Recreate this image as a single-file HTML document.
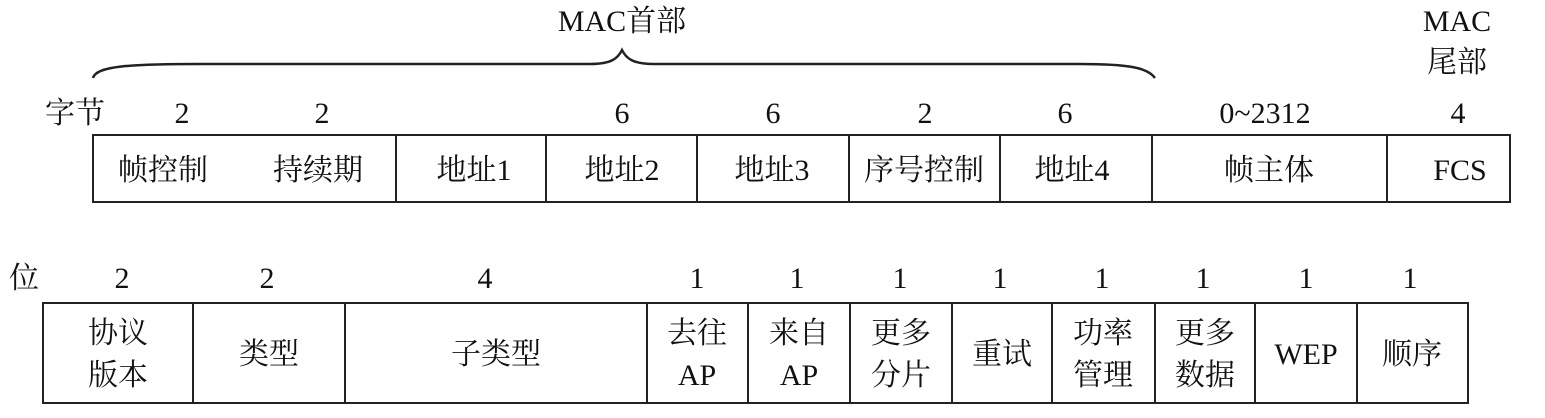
<!DOCTYPE html>
<html><head><meta charset="utf-8"><style>
html,body{margin:0;padding:0;background:#fff;}
svg text{font-family:"Liberation Serif","Noto Serif CJK SC",serif;font-size:30px;fill:#111;}
</style></head><body>
<svg width="1545" height="413" viewBox="0 0 1545 413" xmlns="http://www.w3.org/2000/svg">
<g stroke="#222" stroke-width="2" fill="none">
<path d="M93 78 C96 66 130 64 200 64 L590 64 C612 64 618 58 622 50 C626 58 632 64 654 64 L1080 64 C1130 64 1148 68 1155 78" stroke-width="2.5"/>
<rect x="93" y="135" width="1417" height="67"/>
<path d="M396 135V202M546 135V202M697 135V202M849 135V202M1000 135V202M1152 135V202M1387 135V202"/>
<rect x="43" y="303" width="1425" height="100"/>
<path d="M193 303V403M345 303V403M647 303V403M748 303V403M850 303V403M952 303V403M1052 303V403M1155 303V403M1255 303V403M1357 303V403"/>
</g>
<g text-anchor="middle">
<text x="622" y="31">MAC首部</text>
<text x="1457" y="31">MAC</text>
<text x="1457" y="72">尾部</text>
<text x="75" y="123">字节</text>
<text x="182" y="123">2</text><text x="322" y="123">2</text><text x="622" y="123">6</text><text x="773" y="123">6</text><text x="925" y="123">2</text><text x="1065" y="123">6</text><text x="1265" y="123">0~2312</text><text x="1458" y="123">4</text>
<text x="163" y="180">帧控制</text><text x="318" y="180">持续期</text><text x="474" y="180">地址1</text><text x="622" y="180">地址2</text><text x="772" y="180">地址3</text><text x="924" y="180">序号控制</text><text x="1072" y="180">地址4</text><text x="1269" y="180">帧主体</text><text x="1460" y="180">FCS</text>
<text x="24" y="288">位</text>
<text x="122" y="288">2</text><text x="267" y="288">2</text><text x="485" y="288">4</text><text x="697" y="288">1</text><text x="797" y="288">1</text><text x="900" y="288">1</text><text x="1000" y="288">1</text><text x="1102" y="288">1</text><text x="1203" y="288">1</text><text x="1306" y="288">1</text><text x="1410" y="288">1</text>
<text x="118" y="343">协议</text><text x="118" y="385">版本</text>
<text x="269" y="364">类型</text>
<text x="496" y="364">子类型</text>
<text x="697" y="343">去往</text><text x="697" y="385">AP</text>
<text x="799" y="343">来自</text><text x="799" y="385">AP</text>
<text x="901" y="343">更多</text><text x="901" y="385">分片</text>
<text x="1002" y="364">重试</text>
<text x="1103" y="343">功率</text><text x="1103" y="385">管理</text>
<text x="1205" y="343">更多</text><text x="1205" y="385">数据</text>
<text x="1306" y="364">WEP</text>
<text x="1412" y="364">顺序</text>
</g>
</svg>
</body></html>
